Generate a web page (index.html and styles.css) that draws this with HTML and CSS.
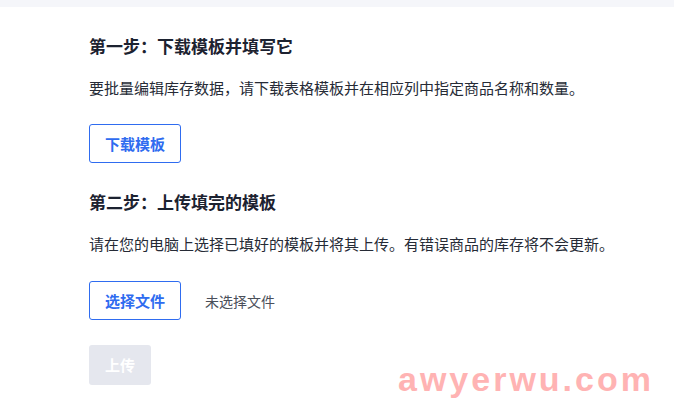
FILE: index.html
```html
<!DOCTYPE html>
<html lang="zh-CN">
<head>
<meta charset="utf-8">
<title>批量编辑库存</title>
<link rel="stylesheet" href="styles.css">
</head>
<body>
<div class="topbar"></div>
<main class="content">
  <section class="step">
    <h2 class="step-title">第一步：下载模板并填写它</h2>
    <p class="step-desc">要批量编辑库存数据，请下载表格模板并在相应列中指定商品名称和数量。</p>
    <button class="btn btn-outline" type="button">下载模板</button>
  </section>
  <section class="step step-two">
    <h2 class="step-title">第二步：上传填完的模板</h2>
    <p class="step-desc">请在您的电脑上选择已填好的模板并将其上传。有错误商品的库存将不会更新。</p>
    <div class="file-row">
      <button class="btn btn-outline" type="button">选择文件</button>
      <span class="file-name">未选择文件</span>
    </div>
    <button class="btn btn-disabled" type="button" disabled>上传</button>
  </section>
</main>
<div class="watermark">awyerwu.com</div>
</body>
</html>
```

FILE: styles.css
```css
html, body {
  margin: 0;
  padding: 0;
  background: #ffffff;
  font-family: "Noto Sans CJK SC", "Noto Sans", sans-serif;
  color: #1f2533;
}

.topbar {
  height: 7px;
  background: #f5f6fa;
}

.content {
  padding: 27px 0 0 89px;
  display: flex;
  flex-direction: column;
}

.step {
  display: flex;
  flex-direction: column;
  align-items: flex-start;
}

.step-two {
  margin-top: 27px;
}

.step-title {
  margin: 0;
  font-size: 17px;
  line-height: 24px;
  font-weight: 700;
  color: #1c2230;
}

.step-desc {
  margin: 18px 0 0;
  font-size: 15px;
  line-height: 24px;
  font-weight: 400;
  color: #262b36;
}

.btn {
  box-sizing: border-box;
  height: 39px;
  padding: 0 15px;
  font-family: inherit;
  font-size: 15px;
  font-weight: 600;
  line-height: 37px;
  border-radius: 3px;
  margin-top: 24px;
  cursor: pointer;
}

.btn-outline {
  background: #ffffff;
  color: #2f6cf0;
  border: 1px solid #2f6cf0;
}

.file-row {
  margin-top: 25px;
  display: flex;
  align-items: center;
  gap: 24px;
}

.file-row .btn {
  margin-top: 0;
}

.file-name {
  font-size: 14px;
  color: #4a4f5a;
}

.btn-disabled {
  margin-top: 25px;
  height: 40px;
  padding: 0 16px;
  border: none;
  background: #e5e7ee;
  color: #ffffff;
  line-height: 40px;
}

.watermark {
  position: absolute;
  left: 398px;
  top: 359px;
  font-family: "Liberation Sans", Arial, sans-serif;
  font-weight: 700;
  font-size: 34px;
  letter-spacing: 3px;
  color: #ffb3b3;
  line-height: 40px;
}
```
